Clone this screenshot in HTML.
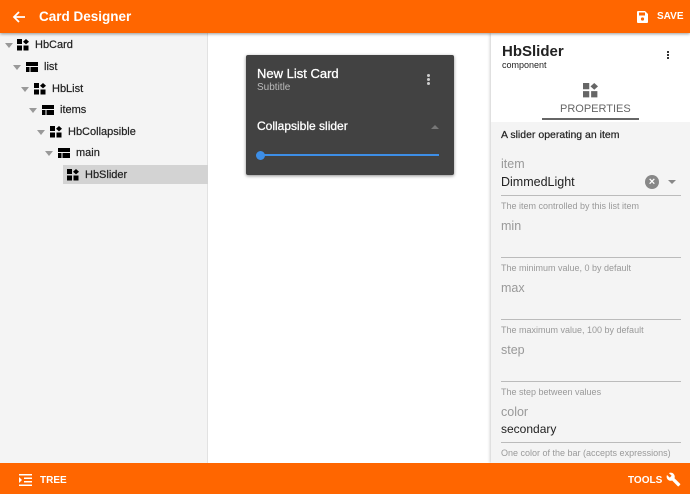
<!DOCTYPE html>
<html><head><meta charset="utf-8"><style>
*{margin:0;padding:0;box-sizing:border-box}
body{width:690px;height:494px;overflow:hidden;font-family:"Liberation Sans",Arial,sans-serif;background:#fff;position:relative}
.a{position:absolute;white-space:nowrap}
.top{left:0;top:0;width:690px;height:33px;background:#ff6600;box-shadow:0 1px 3px rgba(0,0,0,.4);z-index:5}
.bot{left:0;top:463px;width:690px;height:31px;background:#ff6600;z-index:5}
.left{left:0;top:33px;width:208px;height:430px;background:#f4f4f4;border-right:1px solid #e2e2e2}
.right{left:491px;top:33px;width:199px;height:430px;background:#f4f4f4;box-shadow:-1px 0 3px rgba(0,0,0,.2)}
.tri{width:0;height:0;border-left:4px solid transparent;border-right:4px solid transparent;border-top:5px solid #999}
.tt{font-size:11px;color:#222;-webkit-text-stroke:0.2px #222}
.lbl{font-size:12.5px;color:#999;left:501px}
.hlp{font-size:9px;color:#999;left:501px}
.ul{left:501px;width:180px;height:1px;background:#bbb}
</style></head><body>
<div class="a top"></div>
<svg class="a" style="left:12px;top:10px;z-index:6" width="14" height="14" viewBox="0 0 14 14"><path d="M13 7H2M7 2L2 7l5 5" stroke="#fff" stroke-width="1.8" fill="none"/></svg>
<div class="a" style="left:39px;top:9px;font-size:13.5px;font-weight:bold;color:#fff;z-index:6">Card Designer</div>
<svg class="a" style="left:637px;top:11px;z-index:6" width="11" height="12" viewBox="0 0 11 12"><path d="M1 0h7l3 3v8a1 1 0 0 1-1 1H1a1 1 0 0 1-1-1V1a1 1 0 0 1 1-1z" fill="#fff"/><rect x="2" y="1.5" width="6" height="3" fill="#ff6600"/><circle cx="5.5" cy="8" r="1.6" fill="#ff6600"/></svg>
<div class="a" style="left:657px;top:11px;font-size:10px;font-weight:bold;color:#fff;z-index:6">SAVE</div>

<div class="a left"></div>
<div class="a" style="left:63px;top:165px;width:145px;height:19px;background:#d3d3d3"></div>
<div class="a tri" style="left:5px;top:43px"></div>
<svg class="a" style="left:17px;top:39px" width="12" height="12" viewBox="0 0 12 12"><rect x="0" y="0" width="5" height="5"/><rect x="0" y="6.5" width="5" height="5"/><rect x="6.5" y="6.5" width="5" height="5"/><path d="M9 0l3 2.7L9 5.4 6 2.7z"/></svg>
<div class="a tt" style="left:35px;top:39px">HbCard</div>

<div class="a tri" style="left:13px;top:65px"></div>
<svg class="a" style="left:26px;top:62px" width="12" height="10" viewBox="0 0 12 10"><rect x="0" y="0" width="12" height="4"/><rect x="0" y="5" width="3.5" height="5"/><rect x="4.5" y="5" width="7.5" height="5"/></svg>
<div class="a tt" style="left:44px;top:61px">list</div>

<div class="a tri" style="left:21px;top:87px"></div>
<svg class="a" style="left:34px;top:83px" width="12" height="12" viewBox="0 0 12 12"><rect x="0" y="0" width="5" height="5"/><rect x="0" y="6.5" width="5" height="5"/><rect x="6.5" y="6.5" width="5" height="5"/><path d="M9 0l3 2.7L9 5.4 6 2.7z"/></svg>
<div class="a tt" style="left:52px;top:83px">HbList</div>

<div class="a tri" style="left:29px;top:108px"></div>
<svg class="a" style="left:42px;top:105px" width="12" height="10" viewBox="0 0 12 10"><rect x="0" y="0" width="12" height="4"/><rect x="0" y="5" width="3.5" height="5"/><rect x="4.5" y="5" width="7.5" height="5"/></svg>
<div class="a tt" style="left:60px;top:104px">items</div>

<div class="a tri" style="left:37px;top:130px"></div>
<svg class="a" style="left:50px;top:126px" width="12" height="12" viewBox="0 0 12 12"><rect x="0" y="0" width="5" height="5"/><rect x="0" y="6.5" width="5" height="5"/><rect x="6.5" y="6.5" width="5" height="5"/><path d="M9 0l3 2.7L9 5.4 6 2.7z"/></svg>
<div class="a tt" style="left:68px;top:126px">HbCollapsible</div>

<div class="a tri" style="left:45px;top:151px"></div>
<svg class="a" style="left:58px;top:148px" width="12" height="10" viewBox="0 0 12 10"><rect x="0" y="0" width="12" height="4"/><rect x="0" y="5" width="3.5" height="5"/><rect x="4.5" y="5" width="7.5" height="5"/></svg>
<div class="a tt" style="left:76px;top:147px">main</div>

<svg class="a" style="left:67px;top:169px" width="12" height="12" viewBox="0 0 12 12"><rect x="0" y="0" width="5" height="5"/><rect x="0" y="6.5" width="5" height="5"/><rect x="6.5" y="6.5" width="5" height="5"/><path d="M9 0l3 2.7L9 5.4 6 2.7z"/></svg>
<div class="a tt" style="left:85px;top:169px">HbSlider</div>

<div class="a" style="left:246px;top:55px;width:208px;height:120px;background:#424242;border-radius:2px;box-shadow:0 1px 3px rgba(0,0,0,.45)"></div>
<div class="a" style="left:257px;top:66px;font-size:13px;color:#fff;-webkit-text-stroke:0.3px #fff">New List Card</div>
<div class="a" style="left:257px;top:82px;font-size:10px;color:#bbb">Subtitle</div>
<div class="a" style="left:427px;top:74px;width:3px;height:3px;border-radius:50%;background:#ccc;box-shadow:0 4px 0 #ccc,0 8px 0 #ccc"></div>
<div class="a" style="left:257px;top:119px;font-size:12px;color:#fff;-webkit-text-stroke:0.3px #fff">Collapsible slider</div>
<div class="a" style="left:431px;top:125px;width:0;height:0;border-left:4px solid transparent;border-right:4px solid transparent;border-bottom:4px solid #777"></div>
<div class="a" style="left:260px;top:154px;width:179px;height:2px;background:#3d8ee6"></div>
<div class="a" style="left:256px;top:151px;width:9px;height:9px;border-radius:50%;background:#3d8ee6"></div>

<div class="a right"></div>
<div class="a" style="left:491px;top:33px;width:199px;height:89px;background:#fff"></div>
<div class="a" style="left:502px;top:43px;font-size:15px;font-weight:bold;color:#222">HbSlider</div>
<div class="a" style="left:502px;top:60px;font-size:9px;color:#222">component</div>
<div class="a" style="left:667px;top:51px;width:2px;height:2px;background:#333;box-shadow:0 3px 0 #333,0 6px 0 #333"></div>
<svg class="a" style="left:583px;top:83px" width="15" height="15" viewBox="0 0 12 12"><g fill="#666"><rect x="0" y="0" width="5" height="5"/><rect x="0" y="6.5" width="5" height="5"/><rect x="6.5" y="6.5" width="5" height="5"/><path d="M9 0l3 2.7L9 5.4 6 2.7z"/></g></svg>
<div class="a" style="left:560px;top:103px;font-size:11px;color:#666">PROPERTIES</div>
<div class="a" style="left:542px;top:118px;width:97px;height:2px;background:#666"></div>

<div class="a" style="left:501px;top:129px;font-size:10.5px;color:#222;-webkit-text-stroke:0.2px #222">A slider operating an item</div>
<div class="a lbl" style="top:157px">item</div>
<div class="a" style="left:501px;top:175px;font-size:12.5px;color:#222">DimmedLight</div>
<div class="a" style="left:645px;top:175px;width:14px;height:14px;border-radius:50%;background:#888;color:#fff;font-size:11px;line-height:14px;text-align:center;font-weight:bold">×</div>
<div class="a" style="left:668px;top:180px;width:0;height:0;border-left:4px solid transparent;border-right:4px solid transparent;border-top:4px solid #888"></div>
<div class="a ul" style="top:195px"></div>
<div class="a hlp" style="top:201px">The item controlled by this list item</div>
<div class="a lbl" style="top:219px">min</div>
<div class="a ul" style="top:257px"></div>
<div class="a hlp" style="top:263px">The minimum value, 0 by default</div>
<div class="a lbl" style="top:281px">max</div>
<div class="a ul" style="top:319px"></div>
<div class="a hlp" style="top:325px">The maximum value, 100 by default</div>
<div class="a lbl" style="top:343px">step</div>
<div class="a ul" style="top:381px"></div>
<div class="a hlp" style="top:387px">The step between values</div>
<div class="a lbl" style="top:405px">color</div>
<div class="a" style="left:501px;top:422px;font-size:12px;color:#222">secondary</div>
<div class="a ul" style="top:442px"></div>
<div class="a hlp" style="top:448px">One color of the bar (accepts expressions)</div>

<div class="a bot"></div>
<svg class="a" style="left:19px;top:474px;z-index:6" width="13" height="12" viewBox="0 0 13 12"><g fill="#fff"><rect x="0" y="0" width="13" height="1.5"/><rect x="5" y="3.5" width="8" height="1.5"/><rect x="5" y="7" width="8" height="1.5"/><rect x="0" y="10.5" width="13" height="1.5"/><path d="M0 3l3 3-3 3z"/></g></svg>
<div class="a" style="left:40px;top:475px;font-size:10px;font-weight:bold;color:#fff;z-index:6">TREE</div>
<div class="a" style="left:628px;top:475px;font-size:10px;font-weight:bold;color:#fff;z-index:6">TOOLS</div>
<svg class="a" style="left:666px;top:472px;z-index:6" width="15" height="15" viewBox="0 0 24 24"><path fill="#fff" d="M22.7 19l-9.1-9.1c.9-2.3.4-5-1.5-6.9-2-2-5-2.4-7.4-1.3L9 6 6 9 1.6 4.7C.4 7.1.9 10.1 2.9 12.1c1.9 1.9 4.6 2.4 6.9 1.5l9.1 9.1c.4.4 1 .4 1.4 0l2.3-2.3c.5-.4.5-1.1.1-1.4z"/></svg>
</body></html>
